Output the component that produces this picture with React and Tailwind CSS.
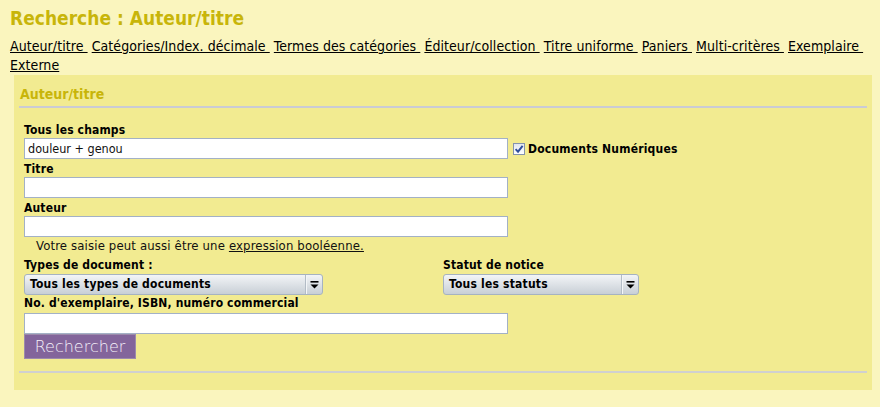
import React from "react";

const links = [
  "Auteur/titre",
  "Catégories/Index. décimale",
  "Termes des catégories",
  "Éditeur/collection",
  "Titre uniforme",
  "Paniers",
  "Multi-critères",
  "Exemplaire",
  "Externe",
];

function Arrow() {
  return (
    <svg width="9" height="8" viewBox="0 0 9 8">
      <rect x="0.5" y="0" width="8" height="1.6" fill="#000" />
      <polygon points="0.5,3.4 8.5,3.4 4.5,7.6" fill="#000" />
    </svg>
  );
}

function Select({ width, label }) {
  return (
    <div
      className={`flex h-[21px] items-center rounded-[3px] border border-[#a6b3c1] bg-linear-to-b from-[#f3f5f7] to-[#c8cfd6] ${width}`}
    >
      <div className="flex-1 pl-[5px] text-[12px] font-bold leading-[19px] tracking-[0.2px] text-black">
        {label}
      </div>
      <div className="flex h-full w-[17px] items-center justify-center border-l border-l-[#b3bcc6] shadow-[inset_1px_0_0_#f4f6f8]">
        <Arrow />
      </div>
    </div>
  );
}

function Input({ value }) {
  return (
    <div className="flex h-[21px] w-[484px] items-center border border-[#a3b1c6] bg-white pl-[3px] text-[12.5px] leading-[19px] text-[#111]">
      {value}
    </div>
  );
}

function Label({ children, top = "pt-[3px]" }) {
  return (
    <div className={`h-[18px] ${top} text-[12px] font-bold leading-[15px] tracking-[0.15px] text-black`}>
      {children}
    </div>
  );
}

function Checkbox() {
  return (
    <svg width="12" height="12" viewBox="0 0 12 12">
      <defs>
        <linearGradient id="cb" x1="0" y1="0" x2="0" y2="1">
          <stop offset="0" stopColor="#dfe5ef" />
          <stop offset="1" stopColor="#ffffff" />
        </linearGradient>
      </defs>
      <rect x="0.5" y="0.5" width="11" height="11" fill="url(#cb)" stroke="#8493ad" />
      <path d="M2.6 6.2 L5 8.7 L9.6 2.8" fill="none" stroke="#2f4d9c" strokeWidth="1.9" />
    </svg>
  );
}

export default function App() {
  return (
    <div className="min-h-[407px] bg-[#faf5be] pl-[10px] pr-[8px] pt-[6px] font-['DejaVu_Sans_Condensed','DejaVu_Sans',sans-serif] font-stretch-condensed">
      <h1 className="text-[19px] font-bold leading-[25px] text-[#c8b50a]">
        Recherche : Auteur/titre
      </h1>
      <div className="mt-[6px] text-[14px] leading-[19px] tracking-[0.07px] text-black">
        {links.map((l, i) => (
          <React.Fragment key={l}>
            <a href="#" className="underline decoration-1">
              {l === "Externe" ? l : l + "\u00a0"}
            </a>
            {i < links.length - 1 ? " " : ""}
          </React.Fragment>
        ))}
      </div>
      <div className="ml-[4px] w-[858px] bg-[#f2eb91] pb-[17px]">
        <div className="px-[5px]">
          <div className="pl-[1px] pt-[9px] text-[14px] font-bold leading-[20px] text-[#c8b50a]">
            Auteur/titre
          </div>
          <div className="mt-[2px] h-[2px] bg-[#cacbd5]" />
        </div>
        <div className="pl-[10px] pt-[12px]">
          <Label>Tous les champs</Label>
          <div className="flex items-center">
            <Input value="douleur + genou" />
            <div className="ml-[5px] flex items-center">
              <Checkbox />
            </div>
            <span className="ml-[3px] text-[12px] font-bold leading-[16px] tracking-[0.2px] text-black">
              Documents Numériques
            </span>
          </div>
          <Label>Titre</Label>
          <Input value="" />
          <Label>Auteur</Label>
          <Input value="" />
          <div className="pl-[12px] text-[13px] leading-[18px] tracking-[0.15px] text-[#111]">
            Votre saisie peut aussi être une{" "}
            <a href="#" className="underline decoration-1">
              expression booléenne.
            </a>
          </div>
          <div className="flex">
            <div className="w-[419px]">
              <Label>Types de document :</Label>
              <div className="mt-[1px]">
                <Select width="w-[299px]" label="Tous les types de documents" />
              </div>
            </div>
            <div>
              <Label>Statut de notice</Label>
              <div className="mt-[1px]">
                <Select width="w-[196px]" label="Tous les statuts" />
              </div>
            </div>
          </div>
          <Label top="pt-[1px]">No. d'exemplaire, ISBN, numéro commercial</Label>
          <Input value="" />
          <button
            type="button"
            className="flex h-[25px] w-[112px] items-center justify-center border border-[#9c8bab] bg-[#83659b] font-['DejaVu_Sans',sans-serif] text-[16px] font-extralight leading-[20px] text-[#f6f2fa] font-stretch-normal"
          >
            Rechercher
          </button>
        </div>
        <div className="mt-[12px] px-[5px]">
          <div className="h-[2px] bg-[#d0d0d0]" />
        </div>
      </div>
    </div>
  );
}
